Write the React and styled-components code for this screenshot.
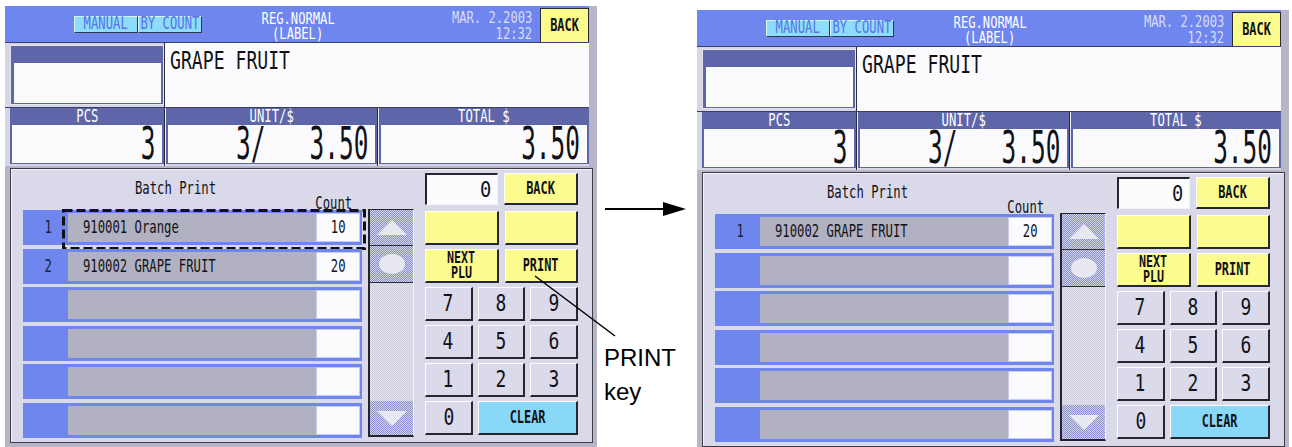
import React from "react";
import styled, { createGlobalStyle } from "styled-components";

const GlobalStyle = createGlobalStyle`
  html, body {
    margin: 0;
    padding: 0;
    background: #ffffff;
  }
  body {
    width: 1292px;
    height: 447px;
    overflow: hidden;
  }
`;

const MONO = `"DejaVu Sans Mono", "Liberation Mono", monospace`;

const Stage = styled.div`
  position: relative;
  display: flex;
  align-items: flex-start;
  width: 1292px;
  height: 447px;
  padding-left: 5px;
  box-sizing: border-box;
`;

// lcd-like condensed text, squeezed horizontally
const Txt = styled.span`
  display: inline-block;
  font-family: ${MONO};
  font-size: ${(p) => p.$fs || 17}px;
  font-weight: ${(p) => (p.$bold ? 700 : 400)};
  color: ${(p) => p.$color || "#111118"};
  line-height: ${(p) => p.$lh || 1};
  white-space: pre;
  transform: scaleX(${(p) => p.$sx || 0.72});
  transform-origin: ${(p) => p.$o || "center"};
`;

const Screen = styled.div`
  width: 592px;
  height: 441px;
  margin-top: ${(p) => p.$top}px;
  flex-shrink: 0;
  background: #b6b6c8;
  display: flex;
  flex-direction: column;
`;

/* ---------- top bar ---------- */

const TopBar = styled.div`
  width: 584px;
  height: 37px;
  box-sizing: border-box;
  background: #6e86ee;
  border-bottom: 1px solid #3a3f6a;
  display: flex;
  align-items: center;
  padding-left: 69px;
`;

const Toggle = styled.div`
  display: flex;
  height: 17px;
`;

const ToggleSeg = styled.div`
  width: 64px;
  height: 17px;
  box-sizing: border-box;
  background: #8ddcf9;
  border-top: 1px solid #d8f4ff;
  border-left: 1px solid #d8f4ff;
  border-right: 1px solid #30384a;
  border-bottom: 1px solid #30384a;
  display: flex;
  align-items: center;
  justify-content: center;
`;

const Title = styled.div`
  width: 192px;
  display: flex;
  flex-direction: column;
  align-items: center;
  padding-top: 5px;
`;

const DateBlock = styled.div`
  flex: 1;
  display: flex;
  flex-direction: column;
  align-items: flex-end;
  padding-right: 8px;
  padding-top: 3px;
`;

const BarBack = styled.div`
  width: 49px;
  height: 34px;
  align-self: flex-end;
  box-sizing: border-box;
  background: #fcfc8e;
  border: 1px solid #2a2a36;
  border-bottom: none;
  display: flex;
  align-items: center;
  justify-content: center;
`;

/* ---------- info rows ---------- */

const InfoRow = styled.div`
  display: flex;
  width: 584px;
  height: ${(p) => p.$h}px;
  box-sizing: border-box;
  padding-left: 5px;
  background: #d6d6e4;
  border-top: ${(p) => (p.$line ? "1px solid #3a3f6a" : "none")};
`;

const NameBox = styled.div`
  width: 154px;
  height: 60px;
  margin-top: 2px;
  box-sizing: border-box;
  background: #5e65a8;
  border: 1px solid #e4e4f0;
  padding: 17px 2px 1px 3px;
  display: flex;
`;

const WhiteFill = styled.div`
  flex: 1;
  background: #fbfbfd;
  display: flex;
  align-items: center;
  justify-content: flex-end;
  padding-right: 7px;
`;

const VLine = styled.div`
  width: ${(p) => p.$w || 1}px;
  align-self: stretch;
  background: #2c2c3a;
  border-right: ${(p) => (p.$w ? "1px solid #eaeaf4" : "none")};
  box-sizing: border-box;
`;

const NameText = styled.div`
  flex: 1;
  background: #fbfbfd;
  padding: 5px 0 0 5px;
`;

const ValueBox = styled.div`
  width: ${(p) => p.$w}px;
  height: 56px;
  box-sizing: border-box;
  background: #5e65a8;
  padding: 0 2px 1px 2px;
  display: flex;
  flex-direction: column;
`;

const ValueHead = styled.div`
  height: 17px;
  display: flex;
  align-items: center;
  justify-content: center;
`;

/* ---------- lower panel ---------- */

const Panel = styled.div`
  width: 583px;
  height: 275px;
  margin: 2px 0 0 5px;
  box-sizing: border-box;
  background: #d9d9e9;
  border: 1px solid #3c3c48;
  box-shadow: inset 1px 1px 0 #f4f4fa;
  display: flex;
  align-items: flex-start;
`;

const ListCol = styled.div`
  width: 339px;
  margin-left: 12px;
  display: flex;
  flex-direction: column;
`;

const ListHead = styled.div`
  height: 41px;
  display: grid;
  grid-template-rows: 28px 13px;
`;

const BatchTitle = styled.div`
  padding-left: 112px;
  display: flex;
  align-items: flex-end;
`;

const CountLabel = styled.div`
  display: flex;
  justify-content: flex-end;
  align-items: center;
  padding-right: 10px;
`;

const List = styled.div`
  display: grid;
  grid-template-rows: repeat(6, 35px);
  row-gap: 3.6px;
`;

const Row = styled.div`
  position: relative;
  display: flex;
  height: 35px;
  box-sizing: border-box;
  background: #6f86ee;
  padding: 3px 2px 3px 0;
`;

const NumCell = styled.div`
  width: 45px;
  box-sizing: border-box;
  padding-left: 5px;
  display: flex;
  align-items: center;
  justify-content: center;
`;

const Field = styled.div`
  flex: 1;
  background: #b1b1c1;
  display: flex;
  align-items: center;
  padding-left: 15px;
`;

const CountCell = styled.div`
  width: 44px;
  box-sizing: border-box;
  background: #fbfbfd;
  border: 1px solid #c6ccf4;
  display: flex;
  align-items: center;
  justify-content: center;
`;

const Highlight = styled.svg`
  position: absolute;
  left: 39px;
  top: -1px;
  overflow: visible;
`;

const Scroll = styled.div`
  width: 46px;
  height: 228px;
  margin: 40px 0 0 6px;
  box-sizing: border-box;
  border-left: 2px solid #23232c;
  border-top: 1px solid #23232c;
  border-bottom: 2px solid #23232c;
  border-right: 1px solid #f0f0f8;
  display: flex;
  flex-direction: column;
  background: repeating-conic-gradient(#e4e4ee 0% 25%, #cdcddb 0% 50%) 0 0 / 2px 2px;
`;

const ScrollBtn = styled.div`
  height: ${(p) => p.$h}px;
  flex-shrink: 0;
  margin-top: ${(p) => (p.$end ? "auto" : "0")};
  border-bottom: ${(p) => (p.$end ? "none" : "1px solid #2c2c38")};
  background: repeating-conic-gradient(#8b8fc7 0% 25%, #d2d4ec 0% 50%) 0 0 / 2px 2px;
  display: flex;
  align-items: center;
  justify-content: center;
`;

const Keypad = styled.div`
  width: 153px;
  margin: 4px 0 0 11px;
  display: flex;
  flex-direction: column;
  gap: 4px;
`;

const KeyRow = styled.div`
  display: flex;
  gap: ${(p) => p.$gap}px;
  height: ${(p) => p.$h || 34}px;
  margin-bottom: ${(p) => p.$mb || 0}px;
`;

const KEY_BG = {
  yellow: "#fcfc8e",
  grey: "#dadaea",
  blue: "#8ad8f8",
};

const Key = styled.div`
  flex: ${(p) => (p.$w ? `0 0 ${p.$w}px` : "1")};
  box-sizing: border-box;
  background: ${(p) => KEY_BG[p.$kind || "grey"]};
  border-top: 1px solid #fdfdff;
  border-left: 1px solid #fdfdff;
  border-right: 2px solid #26262e;
  border-bottom: 2px solid #26262e;
  display: flex;
  flex-direction: column;
  align-items: center;
  justify-content: center;
`;

const Display = styled.div`
  flex: 0 0 73px;
  box-sizing: border-box;
  background: #fcfcfe;
  border-top: 2px solid #26262e;
  border-left: 2px solid #26262e;
  border-right: 1px solid #f4f4fa;
  border-bottom: 1px solid #f4f4fa;
  display: flex;
  align-items: center;
  justify-content: flex-end;
  padding-right: 6px;
`;

/* ---------- annotations between screens ---------- */

const Between = styled.div`
  width: 100px;
  flex-shrink: 0;
  box-sizing: border-box;
  padding: 199px 0 0 7px;
  display: flex;
  flex-direction: column;
`;

const Callout = styled.div`
  margin-top: 122px;
  font-family: "Liberation Sans", Arial, sans-serif;
  font-size: 24px;
  line-height: 34px;
  color: #000;
`;

const Overlay = styled.svg`
  position: absolute;
  left: 0;
  top: 0;
  pointer-events: none;
`;

const BIG = { $fs: 44, $sx: 0.555, $o: "right", $lh: 0.82 };
const TWO_LINE = { $fs: 15, $sx: 0.81, $lh: "16px" };

function ScrollBar() {
  return (
    <Scroll>
      <ScrollBtn $h={35}>
        <svg width="30" height="15" viewBox="0 0 30 15">
          <polygon points="15,0 30,15 0,15" fill="#e8e8f3" />
        </svg>
      </ScrollBtn>
      <ScrollBtn $h={36}>
        <svg width="26" height="20" viewBox="0 0 26 20">
          <ellipse cx="13" cy="10" rx="13" ry="10" fill="#e8e8f3" />
        </svg>
      </ScrollBtn>
      <ScrollBtn $h={34} $end>
        <svg width="30" height="15" viewBox="0 0 30 15">
          <polygon points="0,0 30,0 15,15" fill="#e8e8f3" />
        </svg>
      </ScrollBtn>
    </Scroll>
  );
}

function KeyLabel({ children, small }) {
  return small ? (
    <Txt $bold $fs={15} $sx={0.78} $lh="15px">
      {children}
    </Txt>
  ) : (
    <Txt $bold $sx={0.7}>
      {children}
    </Txt>
  );
}

function Digit({ children }) {
  return (
    <Txt $fs={23} $sx={0.78}>
      {children}
    </Txt>
  );
}

function KeyPad() {
  return (
    <Keypad>
      <KeyRow $gap={6} $h={32} $mb={2}>
        <Display>
          <Txt $fs={22} $sx={0.85} $o="right">
            0
          </Txt>
        </Display>
        <Key $kind="yellow">
          <KeyLabel>BACK</KeyLabel>
        </Key>
      </KeyRow>
      <KeyRow $gap={6}>
        <Key $kind="yellow" />
        <Key $kind="yellow" />
      </KeyRow>
      <KeyRow $gap={6}>
        <Key $kind="yellow">
          <KeyLabel small>NEXT</KeyLabel>
          <KeyLabel small>PLU</KeyLabel>
        </Key>
        <Key $kind="yellow">
          <KeyLabel>PRINT</KeyLabel>
        </Key>
      </KeyRow>
      {[["7", "8", "9"], ["4", "5", "6"], ["1", "2", "3"]].map((r) => (
        <KeyRow $gap={5} key={r[0]}>
          {r.map((d) => (
            <Key key={d}>
              <Digit>{d}</Digit>
            </Key>
          ))}
        </KeyRow>
      ))}
      <KeyRow $gap={5}>
        <Key $w={48}>
          <Digit>0</Digit>
        </Key>
        <Key $kind="blue">
          <KeyLabel>CLEAR</KeyLabel>
        </Key>
      </KeyRow>
    </Keypad>
  );
}

function ScaleScreen({ top, rows, marked }) {
  return (
    <Screen $top={top}>
      <TopBar>
        <Toggle>
          <ToggleSeg>
            <Txt $color="#5a72e6" $lh={0.9}>MANUAL</Txt>
          </ToggleSeg>
          <ToggleSeg>
            <Txt $color="#5a72e6" $lh={0.9}>BY COUNT</Txt>
          </ToggleSeg>
        </Toggle>
        <Title>
          <Txt {...TWO_LINE} $color="#ffffff" $lh="15px">REG.NORMAL</Txt>
          <Txt {...TWO_LINE} $color="#ffffff" $lh="15px">(LABEL)</Txt>
        </Title>
        <DateBlock>
          <Txt {...TWO_LINE} $color="#d9ddf6" $o="right">MAR. 2.2003</Txt>
          <Txt {...TWO_LINE} $color="#d9ddf6" $o="right">12:32</Txt>
        </DateBlock>
        <BarBack>
          <KeyLabel>BACK</KeyLabel>
        </BarBack>
      </TopBar>

      <InfoRow $h={64}>
        <NameBox>
          <WhiteFill />
        </NameBox>
        <VLine />
        <NameText>
          <Txt $fs={25} $sx={0.725} $o="left">GRAPE FRUIT</Txt>
        </NameText>
      </InfoRow>

      <InfoRow $h={59} $line>
        <ValueBox $w={154}>
          <ValueHead>
            <Txt $color="#ffffff" $lh={0.9}>PCS</Txt>
          </ValueHead>
          <WhiteFill>
            <Txt {...BIG}>3</Txt>
          </WhiteFill>
        </ValueBox>
        <VLine $w={2} />
        <ValueBox $w={211}>
          <ValueHead>
            <Txt $color="#ffffff" $lh={0.9}>UNIT/$</Txt>
          </ValueHead>
          <WhiteFill>
            <Txt {...BIG}>{"3/   3.50"}</Txt>
          </WhiteFill>
        </ValueBox>
        <VLine $w={2} />
        <ValueBox $w={210}>
          <ValueHead>
            <Txt $color="#ffffff" $lh={0.9}>TOTAL $</Txt>
          </ValueHead>
          <WhiteFill>
            <Txt {...BIG}>3.50</Txt>
          </WhiteFill>
        </ValueBox>
      </InfoRow>

      <Panel>
        <ListCol>
          <ListHead>
            <BatchTitle>
              <Txt $o="left">Batch Print</Txt>
            </BatchTitle>
            <CountLabel>
              <Txt $o="right">Count</Txt>
            </CountLabel>
          </ListHead>
          <List>
            {rows.map((r, i) => (
              <Row key={i}>
                <NumCell>{r.n && <Txt $color="#1c1e3c">{r.n}</Txt>}</NumCell>
                <Field>{r.name && <Txt $o="left">{r.name}</Txt>}</Field>
                <CountCell>{r.count && <Txt>{r.count}</Txt>}</CountCell>
                {marked && i === 0 && (
                  <Highlight width="304" height="41">
                    <rect
                      x="1.5"
                      y="1.5"
                      width="301"
                      height="38"
                      fill="none"
                      stroke="#111"
                      strokeWidth="3"
                      strokeDasharray="9 4"
                    />
                  </Highlight>
                )}
              </Row>
            ))}
          </List>
        </ListCol>
        <ScrollBar />
        <KeyPad />
      </Panel>
    </Screen>
  );
}

const leftRows = [
  { n: "1", name: "910001 Orange", count: "10" },
  { n: "2", name: "910002 GRAPE FRUIT", count: "20" },
  {},
  {},
  {},
  {},
];

const rightRows = [{ n: "1", name: "910002 GRAPE FRUIT", count: "20" }, {}, {}, {}, {}, {}];

export default function App() {
  return (
    <>
      <GlobalStyle />
      <Stage>
        <ScaleScreen top={6} rows={leftRows} marked />
        <Between>
          <svg width="84" height="20" viewBox="0 0 84 20">
            <line x1="1" y1="10" x2="62" y2="10" stroke="#000" strokeWidth="2" />
            <polygon points="59,3 82,10 59,17" fill="#000" />
          </svg>
          <Callout>
            PRINT
            <br />
            key
          </Callout>
        </Between>
        <ScaleScreen top={10} rows={rightRows} />
        <Overlay width="1292" height="447">
          <line x1="535" y1="276" x2="615" y2="336" stroke="#000" strokeWidth="1.5" />
        </Overlay>
      </Stage>
    </>
  );
}
